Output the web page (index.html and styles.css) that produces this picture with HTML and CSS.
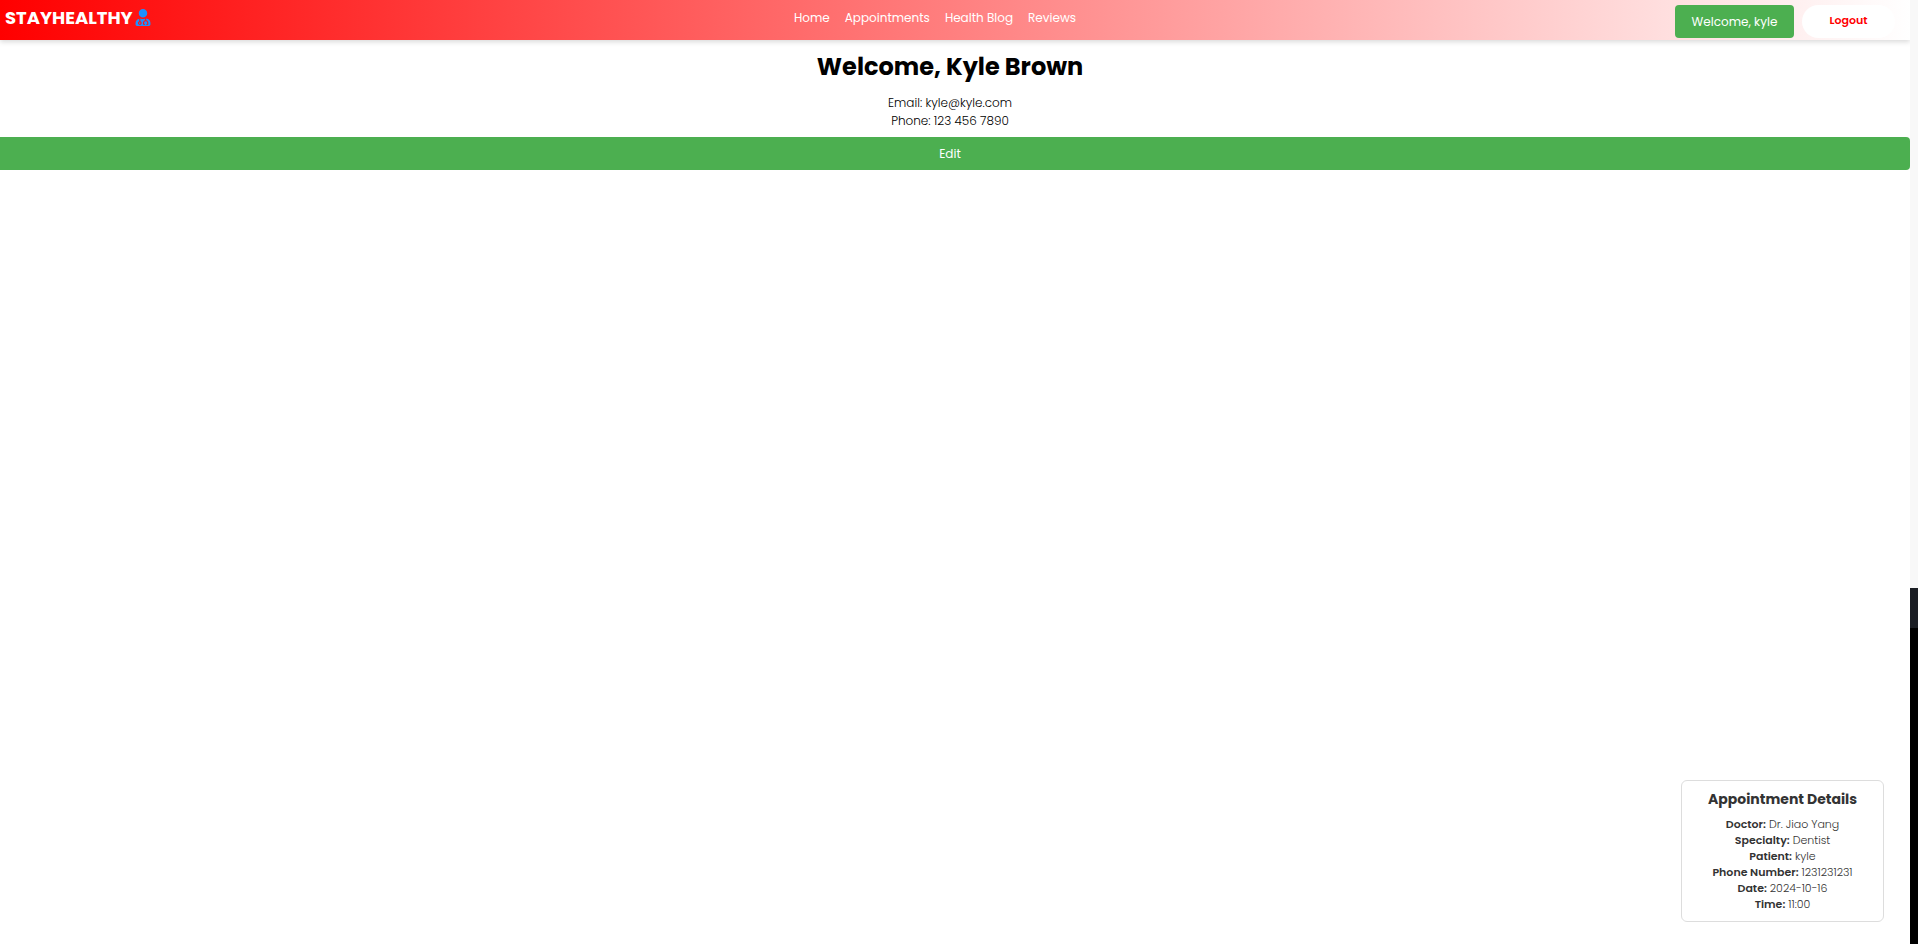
FILE: index.html
```
<!DOCTYPE html>
<html lang="en">
<head>
<meta charset="utf-8">
<title>StayHealthy</title>
<link rel="stylesheet" href="styles.css">
</head>
<body>
<div class="page">
  <header class="navbar">
    <a class="logo" href="#">STAYHEALTHY
      <svg class="logo-icon" viewBox="0 0 448 512" aria-hidden="true">
        <path d="M224 256c70.7 0 128-57.3 128-128S294.7 0 224 0 96 57.3 96 128s57.3 128 128 128zM104 424c0 13.3 10.7 24 24 24s24-10.7 24-24-10.7-24-24-24-24 10.7-24 24zm216-135.4v49c36.5 7.4 64 39.8 64 78.4v41.7c0 7.6-5.4 14.2-12.9 15.7l-32.2 6.4c-4.3.9-8.5-1.9-9.4-6.3l-3.1-15.7c-.9-4.3 1.9-8.6 6.3-9.4l19.3-3.9V416c0-62.8-96-65.1-96 1.9v26.7l19.3 3.9c4.3.9 7.1 5.1 6.3 9.4l-3.1 15.7c-.9 4.3-5.1 7.1-9.4 6.3l-31.2-4.2c-7.9-1.1-13.8-7.8-13.8-15.9V416c0-38.6 27.5-70.9 64-78.4v-45.2c-2.2.7-4.4 1.1-6.6 1.9-18 6.3-37.3 9.8-57.4 9.8s-39.4-3.5-57.4-9.8c-7.4-2.6-14.9-4.2-22.6-5.2v81.6c23.1 6.9 40 28.1 40 53.4 0 30.9-25.1 56-56 56s-56-25.1-56-56c0-25.3 16.9-46.5 40-53.4v-80.4C48.5 301 0 355.8 0 422.4v44.8C0 491.9 20.1 512 44.8 512h358.4c24.7 0 44.8-20.1 44.8-44.8v-44.8c0-72-56.8-130.3-128-133.8z"/>
      </svg>
    </a>
    <nav class="links">
      <a href="#">Home</a>
      <a href="#">Appointments</a>
      <a href="#">Health Blog</a>
      <a href="#">Reviews</a>
    </nav>
    <div class="actions">
      <button class="btn profile" type="button">Welcome, kyle</button>
      <button class="logout" type="button">Logout</button>
    </div>
  </header>
  <main class="profile-details">
    <h1>Welcome, Kyle Brown</h1>
    <p>Email: kyle@kyle.com</p>
    <p>Phone: 123 456 7890</p>
    <button class="btn edit" type="button">Edit</button>
  </main>
  <aside class="card">
    <h2>Appointment Details</h2>
    <p><strong>Doctor:</strong> Dr. Jiao Yang</p>
    <p><strong>Specialty:</strong> Dentist</p>
    <p><strong>Patient:</strong> kyle</p>
    <p><strong>Phone Number:</strong> 1231231231</p>
    <p><strong>Date:</strong> 2024-10-16</p>
    <p><strong>Time:</strong> 11:00</p>
  </aside>
</div>
<div class="edge"></div>
</body>
</html>
```
FILE: styles.css
```
* { box-sizing: border-box; }
body {
  margin: 0;
  min-height: 100vh;
  display: flex;
  background: #fff;
  color: #000;
  font-family: Poppins, Inter, sans-serif;
  font-size: 12px;
}
h1, h2, p { margin: 0; }
button { font-family: inherit; border: 0; cursor: pointer; }
.page { flex: 1; min-width: 0; display: flex; flex-direction: column; overflow: hidden; }
.edge { width: 8px; background: linear-gradient(#f8f8f8 62.3%, #1b1e24 62.3% 66.5%, #000 66.5%); }
.navbar {
  height: 40px;
  padding: 0 15px 0 5px;
  display: grid;
  grid-template-columns: 1fr auto 1fr;
  align-items: center;
  background: linear-gradient(to right, #f00, #fff);
  box-shadow: 0 2px 5px rgba(0, 0, 0, 0.15);
}
.logo {
  display: flex;
  align-items: center;
  gap: 2px;
  color: #fff;
  font-size: 18px;
  font-weight: 700;
  line-height: 34px;
  text-decoration: none;
  padding-bottom: 5px;
}
.logo-icon { width: 16px; height: 17px; fill: #1e90ff; }
.links { display: flex; gap: 15px; padding-bottom: 4px; margin-right: 30px; }
.links a { color: #fff; font-size: 12px; font-weight: 400; line-height: 18px; text-decoration: none; }
.actions { display: flex; justify-content: flex-end; gap: 8px; padding-top: 3px; }
.btn {
  height: 33px;
  background: #4caf50;
  color: #fff;
  border-radius: 4px;
  font-size: 12px;
  font-weight: 400;
}
.profile { width: 119px; padding: 0; }
.logout {
  width: 93px;
  height: 33px;
  padding: 0 0 2px;
  background: #fff;
  color: #f00;
  border-radius: 20px;
  font-size: 11px;
  font-weight: 600;
}
.profile-details {
  margin-left: -10px;
  padding-top: 9px;
  display: flex;
  flex-direction: column;
  text-align: center;
}
.profile-details h1 { font-size: 24px; line-height: 36px; margin-bottom: 9px; }
.profile-details p { font-size: 12px; font-weight: 300; line-height: 18px; }
.edit { margin-top: 7px; }
.card {
  margin: auto 26px 22px auto;
  width: 203px;
  padding: 9px;
  border: 1px solid #ddd;
  border-radius: 6px;
  color: #333;
  text-align: center;
}
.card h2 { font-size: 14px; font-weight: 700; line-height: 18px; margin-bottom: 8px; }
.card p { font-size: 11px; font-weight: 300; line-height: 16px; }
.card strong { font-weight: 600; }
```
